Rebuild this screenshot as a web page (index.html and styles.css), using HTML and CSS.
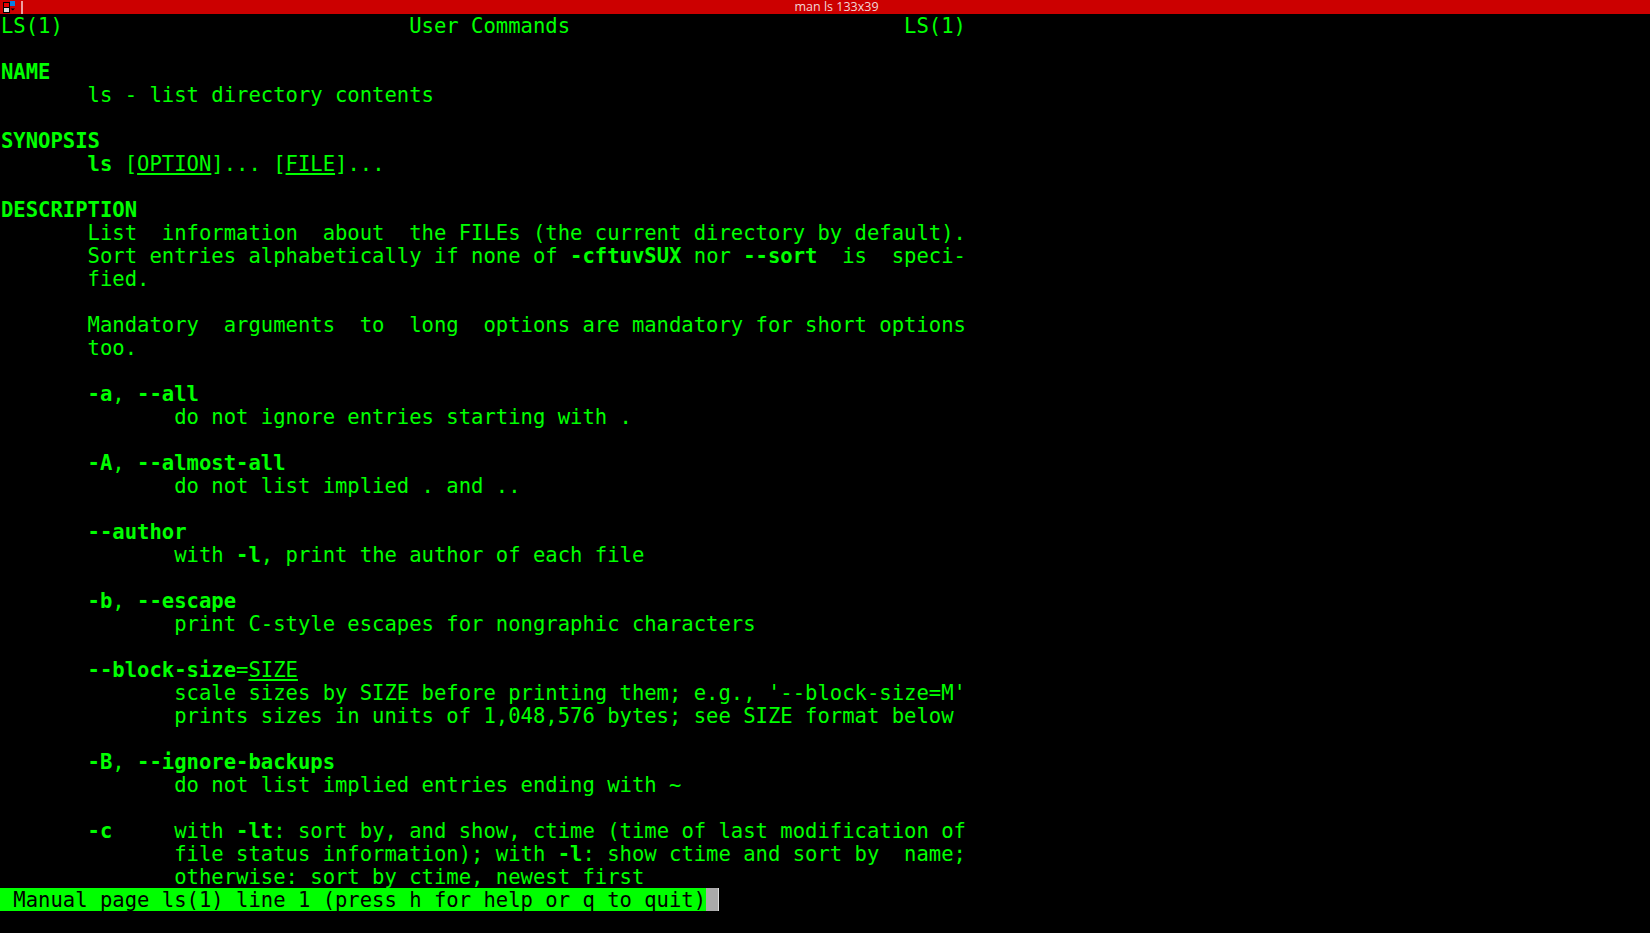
FILE: index.html
```html
<!DOCTYPE html>
<html lang="en">
<head>
<meta charset="utf-8">
<title>man ls 133x39</title>
<link rel="stylesheet" href="styles.css">
</head>
<body>
<header class="titlebar">
<div class="titlebar-left">
<svg class="menu-icon" width="12" height="12" viewBox="0 0 12 12" aria-hidden="true">
<rect x="0" y="1" width="7" height="11" fill="#000000"/>
<rect x="1" y="2" width="5" height="4" fill="#e60000"/>
<rect x="7" y="0" width="5" height="5" fill="#0a7fe0"/>
<rect x="1" y="7" width="5" height="4" fill="#dddddd"/>
<path d="M7.5 7.5h4.5l-2.2 2z" fill="#000000"/>
</svg>
<span class="separator"></span>
</div>
<span class="title">man ls 133x39</span>
</header>
<pre class="terminal">LS(1)                            User Commands                           LS(1)

<b>NAME</b>
       ls - list directory contents

<b>SYNOPSIS</b>
       <b>ls</b> [<u>OPTION</u>]... [<u>FILE</u>]...

<b>DESCRIPTION</b>
       List  information  about  the FILEs (the current directory by default).
       Sort entries alphabetically if none of <b>-cftuvSUX</b> nor <b>--sort</b>  is  speci-
       fied.

       Mandatory  arguments  to  long  options are mandatory for short options
       too.

       <b>-a</b>, <b>--all</b>
              do not ignore entries starting with .

       <b>-A</b>, <b>--almost-all</b>
              do not list implied . and ..

       <b>--author</b>
              with <b>-l</b>, print the author of each file

       <b>-b</b>, <b>--escape</b>
              print C-style escapes for nongraphic characters

       <b>--block-size</b>=<u>SIZE</u>
              scale sizes by SIZE before printing them; e.g., '--block-size=M'
              prints sizes in units of 1,048,576 bytes; see SIZE format below

       <b>-B</b>, <b>--ignore-backups</b>
              do not list implied entries ending with ~

       <b>-c</b>     with <b>-lt</b>: sort by, and show, ctime (time of last modification of
              file status information); with <b>-l</b>: show ctime and sort by  name;
              otherwise: sort by ctime, newest first</pre>
<div class="statusline"><span class="status"> Manual page ls(1) line 1 (press h for help or q to quit)</span><span class="cursor"></span></div>
</body>
</html>
```
FILE: styles.css
```css
html, body {
  margin: 0;
  padding: 0;
  height: 100%;
  background: #000;
  overflow: hidden;
}

.titlebar {
  display: flex;
  align-items: center;
  height: 14px;
  background: #cc0000;
}

.titlebar-left {
  flex: none;
  display: flex;
  align-items: flex-start;
  gap: 6px;
  height: 14px;
  padding: 1px 0 0 3px;
  box-sizing: border-box;
}

.menu-icon {
  display: block;
}

.separator {
  display: block;
  width: 2px;
  height: 13px;
  background: #eda0a0;
}

.title {
  flex: 1;
  text-align: center;
  font-family: "Open Sans", "Liberation Sans", sans-serif;
  font-size: 12.5px;
  line-height: 14px;
  color: #f2d6d6;
}

.terminal {
  margin: 0;
  padding: 1px 0 0 1px;
  font-family: "DejaVu Sans Mono", monospace;
  font-size: 20.55px;
  line-height: 23px;
  color: #00ff00;
  white-space: pre;
}

.terminal b {
  font-weight: bold;
}

.terminal u {
  text-decoration: underline;
  text-underline-offset: 2px;
}

.statusline {
  display: flex;
  height: 23px;
  margin-top: -1px;
  font-family: "DejaVu Sans Mono", monospace;
  font-size: 20.55px;
  line-height: 25px;
  white-space: pre;
}

.status {
  height: 23px;
  padding-left: 1px;
  background: #00ff00;
  color: #000;
}

.cursor {
  width: 12px;
  height: 23px;
  background: #aaaaaa;
  border-right: 1px solid #dddddd;
}
```
